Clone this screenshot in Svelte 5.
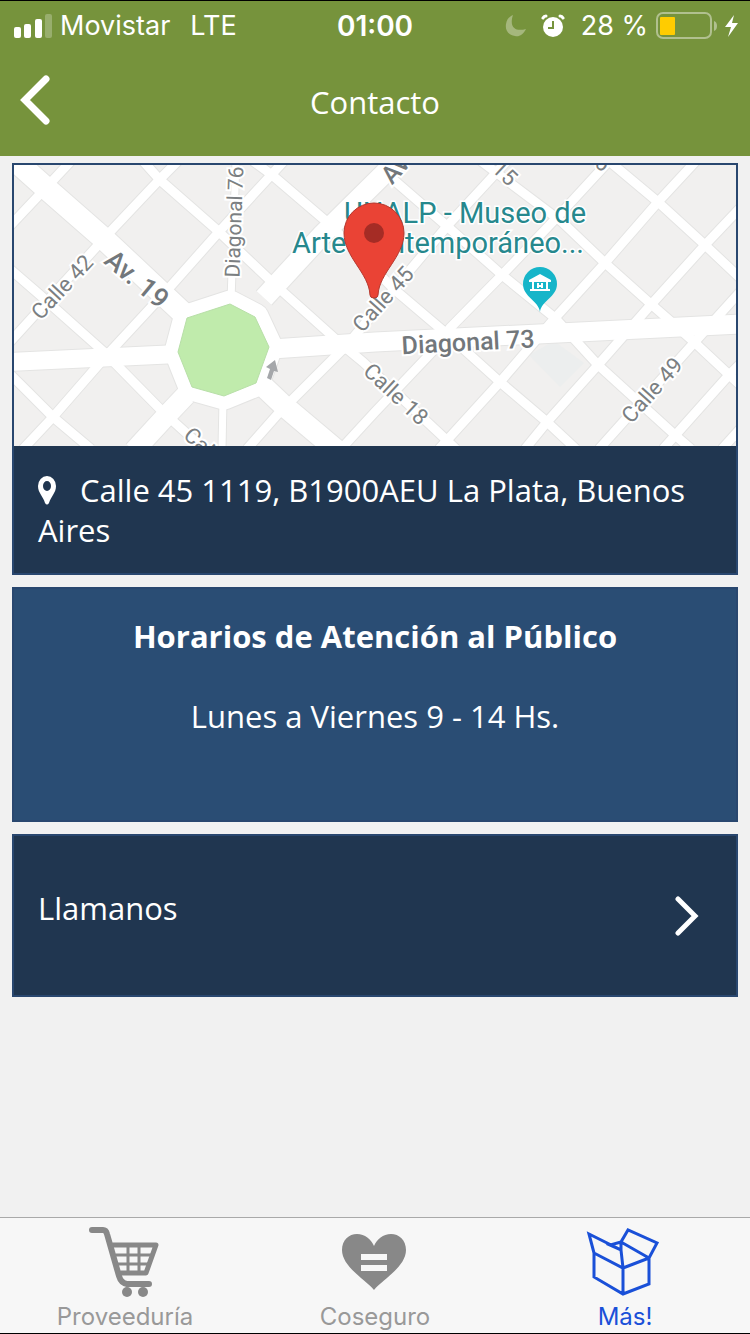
<script>
    const avenues = [
        { d: "M-4 -9L33 24L89 73L170 149", w: 22 },
        { d: "M250 222L269 240L326 288", w: 21 },
        { d: "M385 -6L309 69L250 133", w: 20 },
        { d: "M172 230L153 250L120 286", w: 20 },
        { d: "M-4 197L164 189", w: 18 },
        { d: "M258 184L361 177L726 159", w: 19 },
        { d: "M222 -4L217 135", w: 7 },
        { d: "M209 235L208 284", w: 7 },
    ];

    const streets = [
        "M57 -4L28 27L-4 61",
        "M164 -4L146 14L96 67L-4 177",
        "M270 -4L203 69L156 122L93 190L39 252L9 284",
        "M233 284L263 250L333 180L434 60L493 -4",
        "M327 284L361 247L418 187L436 163L488 110L548 47L595 -4",
        "M425 284L486 217L541 153L591 98L644 37L682 -4",
        "M511 284L533 257L584 200L634 143L691 80L726 43",
        "M585 284L678 180L726 127",
        "M649 284L715 210L726 199",
        "M708 284L726 264",
        "M129 -4L146 15L203 65L259 118L326 178L349 197L425 268L442 284",
        "M239 -4L258 10L313 57L381 125L434 170L486 217L533 257L562 284",
        "M374 10L434 62L488 110L541 153L584 200L661 270L677 284",
        "M467 -4L548 57L591 98L638 140L678 175L726 220",
        "M595 -4L644 37L691 80L726 113",
        "M-4 104L26 130L90 187L149 247L190 284",
        "M-4 209L39 252L77 284",
    ];

    const roads = [...streets.map((d) => ({ d, w: 9 })), ...avenues];
    const plaza = "216,139 241,152 255,182 242,218 210,231 178,222 164,187 173,153";

    const labels = [
        { text: "Calle 42", x: 48, y: 122, r: -47, size: 22 },
        { text: "Av. 19", x: 123, y: 114, r: 40, size: 27, main: true },
        { text: "Diagonal 76", x: 220, y: 57, r: -88, size: 21 },
        { text: "Calle 45", x: 369, y: 134, r: -48, size: 22 },
        { text: "Calle 18", x: 382, y: 229, r: 43, size: 22 },
        { text: "Calle 49", x: 638, y: 225, r: -48, size: 22 },
        { text: "Diagonal 73", x: 454, y: 177, r: -3, size: 25, main: true },
        { text: "Av", x: 381, y: 4, r: -48, size: 25, main: true },
        { text: "15", x: 491, y: 8, r: 43, size: 22 },
        { text: "6", x: 589, y: -2, r: 43, size: 22 },
        { text: "Cal", x: 185, y: 277, r: 43, size: 22 },
    ];
</script>

<div class="screen">
    <header>
        <div class="status">
            <div class="carrier">
                <svg width="40" height="24" viewBox="0 0 40 24" fill="#fff">
                    <rect x="2" y="13" width="7" height="11" rx="2" />
                    <rect x="12" y="10" width="7" height="14" rx="2" />
                    <rect x="23" y="5" width="7" height="19" rx="2" />
                    <rect x="33" y="0" width="7" height="24" rx="2" opacity=".25" />
                </svg>
                <span>Movistar</span>
                <span class="network">LTE</span>
            </div>
            <strong>01:00</strong>
            <div class="power">
                <svg width="22" height="22" viewBox="0 0 22 22">
                    <path d="M8 0C4 12 10 17 21 14C18 20 14 22 10 21C3 20 0 15 1 9C2 4 4 2 8 0Z" fill="#a5b77d" />
                </svg>
                <svg class="alarm" width="24" height="24" viewBox="0 0 24 24">
                    <circle cx="12" cy="13" r="10" fill="#fff" />
                    <path d="M2 4Q3 2 5 2M19 2Q21 2 22 4" fill="none" stroke="#fff" stroke-width="3" stroke-linecap="round" />
                    <path d="M12 7V14H7" fill="none" stroke="#76933c" stroke-width="2" />
                </svg>
                <span>28 %</span>
                <svg width="82" height="28" viewBox="0 0 82 28">
                    <rect x="1" y="1" width="54" height="25" rx="6" fill="none" stroke="#b1c08f" stroke-width="2" />
                    <rect x="4" y="5" width="15" height="18" rx="1" fill="#ffcc00" />
                    <path d="M58 9Q61 10 61 14Q61 18 58 19Z" fill="#b1c08f" />
                    <path d="M78 3L69 15H75L72 25L82 11H76Z" fill="#fff" />
                </svg>
            </div>
        </div>
        <nav class="titlebar">
            <button class="back" aria-label="Volver">
                <svg width="30" height="50" viewBox="0 0 30 50">
                    <path d="M26 4L5 25L26 46" fill="none" stroke="#fff" stroke-width="7" stroke-linecap="round" stroke-linejoin="miter" />
                </svg>
            </button>
            <h1>Contacto</h1>
        </nav>
    </header>

    <main>
        <section class="card dark">
            <svg class="map" viewBox="0 0 722 281">
                <rect width="722" height="281" fill="#f1f0ef" />
                <path d="M515 190L540 176L570 198L546 222Z" fill="#eceeee" />
                <g fill="none" stroke="#e4e4e3" stroke-linejoin="round">
                    {#each roads as road}
                        <path d={road.d} stroke-width={road.w + 2} />
                    {/each}
                    <polygon points={plaza} stroke-width="29" />
                </g>
                <g fill="none" stroke="#fff" stroke-linejoin="round">
                    {#each roads as road}
                        <path d={road.d} stroke-width={road.w} />
                    {/each}
                    <polygon points={plaza} stroke-width="27" />
                </g>
                <polygon points={plaza} fill="#c0ebac" stroke="#b8dfa8" />
                <path d="M253 213L256 204L252 202L261 195L264 207L260 206L257 215Z" fill="#a5a7aa" />
                {#each labels as label}
                    <text
                        class="street"
                        class:avenue={label.main}
                        transform="translate({label.x} {label.y}) rotate({label.r})"
                        font-size={label.size}
                        dy=".35em">{label.text}</text
                    >
                {/each}
                <g class="place">
                    <text x="451" y="58">UNALP - Museo de</text>
                    <text x="424" y="88">Arte Contemporáneo...</text>
                </g>
                <g>
                    <path d="M526 147C525 136 509 132 509 119A17 17 0 0 1 543 119C543 132 527 136 526 147Z" fill="#16b5c9" />
                    <path d="M515 115L526 109L537 115V117H515ZM516 124H536V126H516Z" fill="#fff" />
                    <path d="M519 117V124M533 117V124M524 118V123M528 118V123M524 121H528" fill="none" stroke="#fff" stroke-width="2" />
                </g>
                <path
                    d="M356 130C355 108 330 92 330 68A30 30 0 0 1 390 68C390 92 365 108 364 130Q364 133 360 133Q356 133 356 130Z"
                    fill="#ea4335"
                    stroke="#b5372d"
                />
                <circle cx="360" cy="68" r="10" fill="#a52c25" />
            </svg>
            <p class="address">
                <svg class="pin" width="20" height="30" viewBox="0 0 20 30">
                    <path d="M9 0A9 10 0 0 0 0 10C0 17 5 20 7 27Q9 30 11 27C13 20 18 17 18 10A9 10 0 0 0 9 0ZM9 5A4 5 0 1 1 9 15A4 5 0 1 1 9 5Z" fill="#fff" fill-rule="evenodd" />
                </svg>Calle 45 1119, B1900AEU La Plata, Buenos Aires
            </p>
        </section>

        <section class="card hours">
            <h2>Horarios de Atención al Público</h2>
            <p>Lunes a Viernes 9 - 14 Hs.</p>
        </section>

        <a class="card dark call" href="#llamar">
            <span>Llamanos</span>
            <svg width="26" height="40" viewBox="0 0 26 40">
                <path d="M4 3L21 20L4 37" fill="none" stroke="#fff" stroke-width="5" stroke-linecap="round" />
            </svg>
        </a>
    </main>

    <nav class="tabs">
        <a href="#proveeduria">
            <svg width="70" height="70" viewBox="0 0 70 70">
                <g fill="none" stroke="#888" stroke-linecap="round" stroke-linejoin="round">
                    <path d="M2 3H13Q16 3 17 7L29 49Q31 56 37 57H59" stroke-width="6" />
                    <path d="M23 18H66L56 46H31" stroke-width="5" />
                    <path d="M26 28H61M28 37H58M38 20V46M49 20V46" stroke-width="3" />
                </g>
                <circle cx="37" cy="65" r="5" fill="#888" />
                <circle cx="53" cy="65" r="5" fill="#888" />
            </svg>
            <span>Proveeduría</span>
        </a>
        <a href="#coseguro">
            <svg width="70" height="70" viewBox="0 0 70 70">
                <path d="M34 63C26 53 2 40 2 23C2 13 9 7 17 7C25 7 31 12 34 19C37 12 43 7 51 7C59 7 66 13 66 23C66 40 42 53 34 63Z" fill="#888" />
                <path d="M21 27H47V33H21ZM21 38H47V44H21Z" fill="#f7f7f7" />
            </svg>
            <span>Coseguro</span>
        </a>
        <a class="active" href="#mas">
            <svg width="70" height="70" viewBox="0 0 70 70">
                <path d="M4 26L33 41L59 31V57L33 67L4 50ZL-1 7L31 23L33 41V67M59 31L31 15L38 3L67 16L59 31M31 15L20 18L31 23V15" fill="none" stroke="#1a50d8" stroke-width="3" overflow="visible" />
            </svg>
            <span>Más!</span>
        </a>
    </nav>
</div>

<style>
    :global(body) {
        margin: 0;
        background: #f1f1f1;
    }

    .screen {
        box-sizing: border-box;
        min-height: 100vh;
        display: flex;
        flex-direction: column;
        border-top: 1px solid #000;
        border-bottom: 1px solid #000;
        font-family: "Open Sans", "Noto Sans", sans-serif;
        font-size: 31px;
        line-height: 40px;
        color: #fff;
    }

    header {
        background: #76933c;
    }

    .status {
        display: grid;
        grid-template-columns: 1fr auto 1fr;
        align-items: center;
        height: 50px;
        padding: 0 12px;
        font-family: Inter, sans-serif;
        font-size: 27px;
    }

    .carrier,
    .power {
        display: flex;
        align-items: center;
        gap: 8px;
    }

    .power {
        justify-content: flex-end;
    }

    .network {
        margin-left: 12px;
    }

    .alarm {
        margin: 0 8px 0 6px;
    }

    .status strong {
        font-size: 28px;
        font-weight: 600;
    }

    .titlebar {
        display: grid;
        grid-template-columns: 60px 1fr 60px;
        align-items: center;
        height: 105px;
    }

    .back {
        display: flex;
        padding: 0 0 8px 20px;
        border: 0;
        background: none;
        cursor: pointer;
    }

    h1,
    h2,
    p {
        margin: 0;
        font-size: inherit;
        font-weight: 400;
    }

    h1 {
        padding-bottom: 4px;
        text-align: center;
    }

    main {
        flex: 1;
        display: flex;
        flex-direction: column;
        gap: 12px;
        padding: 7px 12px;
    }

    .card {
        border: 2px solid #29476f;
        background: #2a4d74;
    }

    .dark {
        background: #203650;
    }

    .map {
        display: block;
        width: 100%;
        height: auto;
    }

    .street {
        fill: #7b7f82;
        stroke: #fff;
        stroke-width: 4px;
        paint-order: stroke;
        font-family: Roboto, sans-serif;
        text-anchor: middle;
    }

    .avenue {
        fill: #72777b;
        font-weight: 500;
    }

    .place {
        fill: #26888d;
        stroke: #fff;
        stroke-width: 3px;
        paint-order: stroke;
        font-family: Roboto, sans-serif;
        font-size: 29px;
        text-anchor: middle;
    }

    .address {
        padding: 24px 24px 23px;
    }

    .pin {
        margin-right: 22px;
        vertical-align: -4px;
    }

    .hours {
        padding: 27px 24px 84px;
        text-align: center;
    }

    h2 {
        margin-bottom: 40px;
        font-weight: 700;
    }

    .call {
        display: flex;
        align-items: center;
        justify-content: space-between;
        padding: 52px 36px 51px 24px;
        color: #fff;
        text-decoration: none;
    }

    .call span {
        padding-bottom: 16px;
    }

    .tabs {
        display: grid;
        grid-template-columns: repeat(3, 1fr);
        height: 115px;
        border-top: 1px solid #a9a9a9;
        background: #f7f7f7;
        font-family: Inter, sans-serif;
        font-size: 24px;
        line-height: 28px;
    }

    .tabs a {
        display: flex;
        flex-direction: column;
        align-items: center;
        gap: 6px;
        padding-top: 9px;
        color: #999;
        text-decoration: none;
    }

    .tabs svg {
        overflow: visible;
    }

    .tabs .active {
        color: #1a50d8;
    }
</style>
